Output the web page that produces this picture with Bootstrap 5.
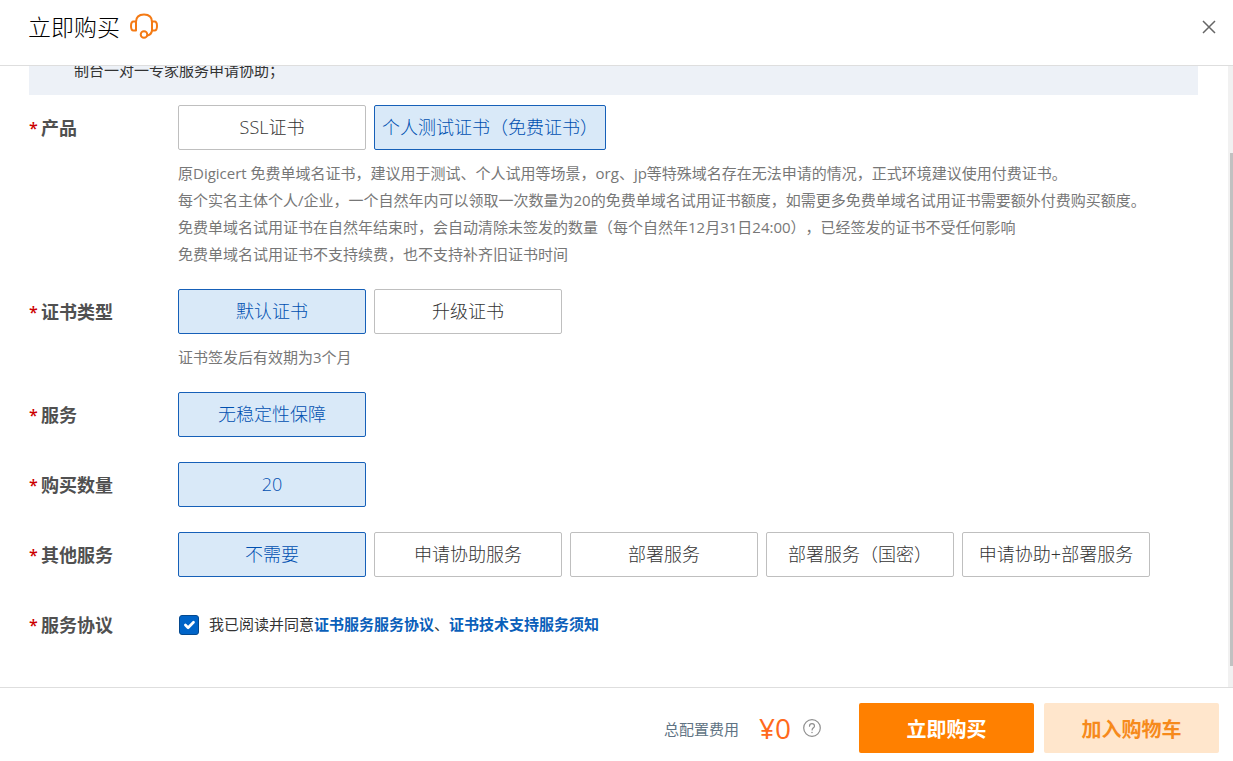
<!DOCTYPE html>
<html lang="zh-CN">
<head>
<meta charset="utf-8">
<meta name="viewport" content="width=device-width, initial-scale=1">
<title>立即购买</title>
<link href="https://cdn.jsdelivr.net/npm/bootstrap@5.3.0/dist/css/bootstrap.min.css" rel="stylesheet">
<style>
  body { font-family: "Open Sans", "Noto Sans CJK SC", sans-serif; font-size: 15px; line-height: 27px; color: #333; background: #fff; text-spacing-trim: space-all; }
  .drawer-head { height: 66px; padding: 0 15px 11px 28px; border-bottom: 1px solid #dedede; }
  .drawer-title { font-size: 23px; line-height: 32px; font-weight: 300; color: #000; }
  .headset { margin: 0 0 3px 7px; }
  .close-btn { width: 18px; height: 18px; }
  .drawer-body { min-height: 0; }
  .form-area { padding: 0 30px 0 29px; }
  /* the notice is scrolled up so that only its last line shows */
  .notice { margin-top: -9px; height: 38px; padding-left: 45px; background: #edf1f7; margin-bottom: 10px; }
  .opt-row { margin-bottom: 25px; }
  .opt-row.has-hint { margin-bottom: 21px; }
  .opt-name { width: 149px; height: 45px; font-size: 18px; line-height: 47px; font-weight: 700; color: #505050; }
  .opt-name::before { content: "*"; display: inline-block; width: 12px; line-height: 20px; vertical-align: 1px; color: #c00; font-size: 16px; font-weight: 600; }
  .opts { gap: 8px; }
  .opt { --bs-btn-padding-y: 0; --bs-btn-padding-x: 7px; --bs-btn-font-size: 18px; --bs-btn-border-radius: 2px;
         --bs-btn-color: #333; --bs-btn-bg: #fff; --bs-btn-border-color: #bfbfbf; --bs-btn-hover-color: #0a55b0; --bs-btn-hover-border-color: #1660b8;
         --bs-btn-active-color: #0050b0; --bs-btn-active-bg: #d9e9f8; --bs-btn-active-border-color: #1660b8;
         min-width: 188px; height: 45px; line-height: 43px; font-weight: 300; }
  .hint { margin-top: 10px; color: #777; }
  .agree { min-height: 45px; }
  .agree .form-check-input { width: 20px; height: 20px; margin: 0 10px 0 1px; border-radius: 3px; border-color: #04498f; }
  .agree .form-check-input:checked { background-color: #0064c8; border-color: #04498f; }
  .agree a { color: #0a5fba; font-weight: 700; text-decoration: none; }
  .track { width: 5px; padding: 87px 0 21px 2px; background: #f1f1f1; }
  .thumb { background: #c1c1c1; }
  .drawer-foot { height: 74px; padding: 0 14px 0 0; border-top: 1px solid #dedede; }
  .cost-name { color: #607383; margin-right: 20px; padding-top: 10px; }
  .cost { color: #ff6a1c; font-size: 28px; line-height: 40px; margin-right: 11px; padding-top: 6px; }
  .help { width: 20px; height: 20px; margin: 7px 37px 0 0; }
  .cta { --bs-btn-font-size: 20px; --bs-btn-font-weight: 700; --bs-btn-border-radius: 2px; --bs-btn-border-width: 0; --bs-btn-padding-y: 0;
         --bs-btn-hover-color: #fff; --bs-btn-hover-bg: #f07600; width: 175px; height: 50px; padding-top: 4px; margin-top: 6px; }
  .cta-buy { --bs-btn-color: #fff; --bs-btn-bg: #ff8000; }
  .cta-cart { --bs-btn-color: #f68a1c; --bs-btn-bg: #ffe6cc; margin-left: 10px; }
</style>
</head>
<body>
<div class="d-flex flex-column vh-100 overflow-hidden">
  <header class="drawer-head d-flex align-items-center flex-shrink-0">
    <h1 class="drawer-title m-0">立即购买</h1>
    <svg class="headset" width="34" height="30" viewBox="0 0 34 30" fill="none" stroke="#f47a14" stroke-width="2" stroke-linecap="round" stroke-linejoin="round" aria-hidden="true">
      <path d="M9 10.500H6.500Q4 10.500 4 15t2.500 4.500H9z"/>
      <path d="M25 10.500h2.500Q30 10.500 30 15t-2.500 4.500H25z"/>
      <path d="M9 11C9 6 12 3.500 17 3.500S25 6 25 11M25 19.500C24.500 22.500 23 24 20.500 24.500"/>
      <circle cx="17" cy="23.500" r="3.300"/>
    </svg>
    <button type="button" class="btn border-0 p-0 ms-auto d-flex close-btn" aria-label="关闭">
      <svg width="18" height="18" viewBox="0 0 18 18" stroke="#666" stroke-width="1.500"><path d="M3 3l12 12M15 3L3 15"/></svg>
    </button>
  </header>

  <div class="drawer-body d-flex flex-grow-1">
    <form class="form-area flex-grow-1 overflow-hidden">
      <div class="notice">制台一对一专家服务申请协助；</div>

      <div class="opt-row has-hint d-flex">
        <div class="opt-name flex-shrink-0" id="n1">产品</div>
        <div>
          <div class="opts d-flex flex-wrap" role="group" aria-labelledby="n1">
            <input class="btn-check" type="radio" name="product" id="p1"><label class="btn opt" for="p1">SSL证书</label>
            <input class="btn-check" type="radio" name="product" id="p2" checked><label class="btn opt" for="p2">个人测试证书（免费证书）</label>
          </div>
          <div class="hint">
            <div>原Digicert 免费单域名证书，建议用于测试、个人试用等场景，org、jp等特殊域名存在无法申请的情况，正式环境建议使用付费证书。</div>
            <div>每个实名主体个人/企业，一个自然年内可以领取一次数量为20的免费单域名试用证书额度，如需更多免费单域名试用证书需要额外付费购买额度。</div>
            <div>免费单域名试用证书在自然年结束时，会自动清除未签发的数量（每个自然年12月31日24:00），已经签发的证书不受任何影响</div>
            <div>免费单域名试用证书不支持续费，也不支持补齐旧证书时间</div>
          </div>
        </div>
      </div>

      <div class="opt-row has-hint d-flex">
        <div class="opt-name flex-shrink-0" id="n2">证书类型</div>
        <div>
          <div class="opts d-flex flex-wrap" role="group" aria-labelledby="n2">
            <input class="btn-check" type="radio" name="kind" id="k1" checked><label class="btn opt" for="k1">默认证书</label>
            <input class="btn-check" type="radio" name="kind" id="k2"><label class="btn opt" for="k2">升级证书</label>
          </div>
          <div class="hint">证书签发后有效期为3个月</div>
        </div>
      </div>

      <div class="opt-row d-flex">
        <div class="opt-name flex-shrink-0" id="n3">服务</div>
        <div class="opts d-flex flex-wrap" role="group" aria-labelledby="n3">
          <input class="btn-check" type="radio" name="service" id="s1" checked><label class="btn opt" for="s1">无稳定性保障</label>
        </div>
      </div>

      <div class="opt-row d-flex">
        <div class="opt-name flex-shrink-0" id="n4">购买数量</div>
        <div class="opts d-flex flex-wrap" role="group" aria-labelledby="n4">
          <input class="btn-check" type="radio" name="count" id="c1" checked><label class="btn opt" for="c1">20</label>
        </div>
      </div>

      <div class="opt-row d-flex">
        <div class="opt-name flex-shrink-0" id="n5">其他服务</div>
        <div class="opts d-flex flex-wrap" role="group" aria-labelledby="n5">
          <input class="btn-check" type="radio" name="extra" id="e1" checked><label class="btn opt" for="e1">不需要</label>
          <input class="btn-check" type="radio" name="extra" id="e2"><label class="btn opt" for="e2">申请协助服务</label>
          <input class="btn-check" type="radio" name="extra" id="e3"><label class="btn opt" for="e3">部署服务</label>
          <input class="btn-check" type="radio" name="extra" id="e4"><label class="btn opt" for="e4">部署服务（国密）</label>
          <input class="btn-check" type="radio" name="extra" id="e5"><label class="btn opt" for="e5">申请协助+部署服务</label>
        </div>
      </div>

      <div class="d-flex">
        <div class="opt-name flex-shrink-0">服务协议</div>
        <div class="agree d-flex align-items-center">
          <input class="form-check-input" type="checkbox" id="agree" checked>
          <label for="agree">我已阅读并同意<a href="#">证书服务服务协议</a>、<a href="#">证书技术支持服务须知</a></label>
        </div>
      </div>
    </form>
    <div class="track d-flex flex-shrink-0"><div class="thumb flex-grow-1"></div></div>
  </div>

  <footer class="drawer-foot d-flex align-items-center justify-content-end flex-shrink-0">
    <span class="cost-name">总配置费用</span>
    <span class="cost">¥0</span>
    <svg class="help" viewBox="0 0 20 20" fill="none" stroke="#8f8f8f" stroke-width="1.200" stroke-linecap="round" aria-hidden="true">
      <circle cx="10" cy="10" r="8.300"/>
      <path d="M7.500 8.200C7.500 6.500 8.500 5.600 10 5.600s2.500.9 2.500 2.300c0 1.800-2.400 1.900-2.400 4"/>
      <path d="M10 14.400v.2" stroke-width="1.500"/>
    </svg>
    <button type="button" class="btn cta cta-buy">立即购买</button>
    <button type="button" class="btn cta cta-cart">加入购物车</button>
  </footer>
</div>
<script src="https://cdn.jsdelivr.net/npm/bootstrap@5.3.0/dist/js/bootstrap.bundle.min.js"></script>
</body>
</html>
